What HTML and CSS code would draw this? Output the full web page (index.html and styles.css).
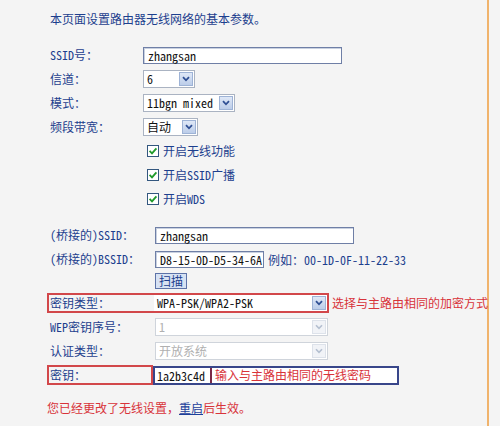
FILE: index.html
```html
<!DOCTYPE html>
<html lang="zh-CN">
<head>
<meta charset="utf-8">
<title>无线网络基本设置</title>
<link rel="stylesheet" href="styles.css">
</head>
<body>
<div class="page">
  <div class="title">本页面设置路由器无线网络的基本参数。</div>

  <div class="group g1">
    <div class="row"><span class="lbl">SSID号：</span><span class="input w198">zhangsan</span></div>
    <div class="row"><span class="lbl">信道：</span>
      <span class="sel w52"><span class="val">6</span><span class="arr"><svg width="8" height="6" viewBox="0 0 8 6"><path d="M1 1.2 L4 4.3 L7 1.2" fill="none" stroke="#2f4f94" stroke-width="1.8"/></svg></span></span></div>
    <div class="row"><span class="lbl">模式：</span>
      <span class="sel w92"><span class="val">11bgn mixed</span><span class="arr"><svg width="8" height="6" viewBox="0 0 8 6"><path d="M1 1.2 L4 4.3 L7 1.2" fill="none" stroke="#2f4f94" stroke-width="1.8"/></svg></span></span></div>
    <div class="row"><span class="lbl">频段带宽：</span>
      <span class="sel w55"><span class="val cjk">自动</span><span class="arr"><svg width="8" height="6" viewBox="0 0 8 6"><path d="M1 1.2 L4 4.3 L7 1.2" fill="none" stroke="#2f4f94" stroke-width="1.8"/></svg></span></span></div>
    <div class="row"><span class="lbl"></span><span class="cb"><svg width="12" height="12" viewBox="0 0 12 12"><rect x="0.5" y="0.5" width="11" height="11" fill="#fff" stroke="#33577f"/><path d="M2.6 5.8 L5 8.3 L9.4 3.3" fill="none" stroke="#1f9a2a" stroke-width="1.8"/></svg>开启无线功能</span></div>
    <div class="row"><span class="lbl"></span><span class="cb"><svg width="12" height="12" viewBox="0 0 12 12"><rect x="0.5" y="0.5" width="11" height="11" fill="#fff" stroke="#33577f"/><path d="M2.6 5.8 L5 8.3 L9.4 3.3" fill="none" stroke="#1f9a2a" stroke-width="1.8"/></svg>开启SSID广播</span></div>
    <div class="row"><span class="lbl"></span><span class="cb"><svg width="12" height="12" viewBox="0 0 12 12"><rect x="0.5" y="0.5" width="11" height="11" fill="#fff" stroke="#33577f"/><path d="M2.6 5.8 L5 8.3 L9.4 3.3" fill="none" stroke="#1f9a2a" stroke-width="1.8"/></svg>开启WDS</span></div>
  </div>

  <div class="group g2">
    <div class="row"><span class="lbl">(桥接的)SSID：</span><span class="input w198">zhangsan</span></div>
    <div class="row"><span class="lbl">(桥接的)BSSID：</span><span class="input w109">D8-15-0D-D5-34-6A</span><span class="hint">例如：00-1D-0F-11-22-33</span></div>
    <div class="row short"><span class="lbl"></span><span class="btn">扫描</span></div>
    <div class="row">
      <span class="redbox keytype"><span class="lbl in">密钥类型：</span>
        <span class="sel w173 flat"><span class="val">WPA-PSK/WPA2-PSK</span><span class="arr"><svg width="8" height="6" viewBox="0 0 8 6"><path d="M1 1.2 L4 4.3 L7 1.2" fill="none" stroke="#2f4f94" stroke-width="1.8"/></svg></span></span>
      </span>
      <span class="note">选择与主路由相同的加密方式</span>
    </div>
    <div class="row"><span class="lbl">WEP密钥序号：</span>
      <span class="sel w173 dis"><span class="val">1</span><span class="arr"><svg width="8" height="6" viewBox="0 0 8 6"><path d="M1 1.2 L4 4.3 L7 1.2" fill="none" stroke="#b4bfd0" stroke-width="1.6"/></svg></span></span></div>
    <div class="row"><span class="lbl">认证类型：</span>
      <span class="sel w173 dis"><span class="val cjk">开放系统</span><span class="arr"><svg width="8" height="6" viewBox="0 0 8 6"><path d="M1 1.2 L4 4.3 L7 1.2" fill="none" stroke="#b4bfd0" stroke-width="1.6"/></svg></span></span></div>
    <div class="row">
      <span class="redbox pwlabel"><span class="lbl in">密钥：</span></span>
      <span class="pwinput"><span class="pwval">1a2b3c4d</span><span class="note">输入与主路由相同的无线密码</span></span>
    </div>
  </div>

  <div class="footer">您已经更改了无线设置，<a class="link" href="#">重启</a>后生效。</div>
</div>
</body>
</html>
```

FILE: styles.css
```css
html, body {
  margin: 0;
  padding: 0;
  background: #f4f4f4;
}

body {
  font-family: "Noto Sans Mono CJK SC", "Liberation Mono", "Noto Sans CJK SC", sans-serif;
  font-size: 12px;
  color: #1d3f8e;
}

.page {
  width: 489px;
  min-height: 426px;
  box-sizing: border-box;
  border-right: 2px solid #f0b36c;
  padding: 11px 0 0 50px;
}

.title {
  line-height: 16px;
  height: 16px;
  color: #1d3f8e;
}

.group.g1 {
  margin-top: 16px;
}

.group.g2 {
  margin-top: 12px;
}

.row {
  display: flex;
  align-items: center;
  height: 24px;
}

.row.short {
  height: 20px;
}

.lbl {
  display: inline-block;
  white-space: nowrap;
  line-height: 16px;
}

.g1 .lbl {
  width: 93px;
  flex: none;
}

.g2 .lbl {
  width: 105px;
  flex: none;
}

.g2 .lbl.in {
  width: 104px;
  padding-left: 1px;
}

.input {
  box-sizing: border-box;
  height: 17px;
  border: 1px solid #6f7fa6;
  box-shadow: inset 1px 1px 0 #c9d1e0;
  background: #fff;
  color: #111;
  font-family: "Noto Sans Mono CJK SC", "Liberation Mono", monospace;
  font-size: 12px;
  line-height: 15px;
  padding-left: 4px;
  white-space: nowrap;
}

.w198 { width: 199px; }
.w109 { width: 109px; }
.w52 { width: 52px; }
.w92 { width: 92px; }
.w55 { width: 55px; }
.w173 { width: 173px; }

.sel {
  box-sizing: border-box;
  display: flex;
  align-items: center;
  height: 18px;
  border: 1px solid #aab3c2;
  background: #fff;
  color: #111;
  padding: 0 1px 0 0;
}

.sel .val {
  flex: 1;
  padding-left: 3px;
  font-family: "Noto Sans Mono CJK SC", "Liberation Mono", monospace;
  font-size: 12px;
  line-height: 16px;
  white-space: nowrap;
}

.sel .val.cjk {
  font-family: "Noto Sans CJK SC", sans-serif;
}

.sel .arr {
  flex: none;
  width: 14px;
  height: 14px;
  box-sizing: border-box;
  display: flex;
  align-items: center;
  justify-content: center;
  background: linear-gradient(#dfe8f7, #bccde9);
  border: 1px solid #9eb3d6;
}

.sel.flat {
  border: none;
  height: 16px;
}

.sel.dis {
  border-color: #cfd4db;
  color: #a8a8a8;
}

.sel.dis .val {
  color: #b0b0b0;
}

.sel.dis .arr {
  background: #f1f3f7;
  border-color: #dde2ea;
}

.cb {
  display: flex;
  align-items: center;
  gap: 4px;
  margin-left: 4px;
  line-height: 16px;
  white-space: nowrap;
}

.cb svg {
  flex: none;
}

.hint {
  margin-left: 4px;
  white-space: nowrap;
}

.btn {
  box-sizing: border-box;
  height: 16px;
  width: 32px;
  border: 1px solid #5d73a8;
  background: #d7e2f3;
  color: #1d3f8e;
  line-height: 14px;
  text-align: center;
}

.redbox {
  box-sizing: border-box;
  display: flex;
  align-items: center;
  border: 2px solid #d2474a;
  margin-left: -3px;
}

.redbox.keytype {
  height: 20px;
  width: 283px;
}

.redbox.pwlabel {
  height: 20px;
  width: 106px;
}

.note {
  color: #d8333a;
  margin-left: 3px;
  white-space: nowrap;
  line-height: 16px;
}

.pwinput {
  box-sizing: border-box;
  display: flex;
  align-items: center;
  width: 246px;
  height: 19px;
  border: 2px solid #38468a;
  background: #fff;
}

.pwval {
  box-sizing: border-box;
  height: 15px;
  width: 57px;
  border-right: 2px solid #7a2a46;
  padding-left: 2px;
  color: #111;
  font-family: "Noto Sans Mono CJK SC", "Liberation Mono", monospace;
  font-size: 12px;
  line-height: 15px;
}

.footer {
  margin-top: 13px;
  margin-left: -3px;
  color: #d8333a;
  line-height: 16px;
}

.link {
  color: #1d3f9a;
  text-decoration: underline;
}
```
